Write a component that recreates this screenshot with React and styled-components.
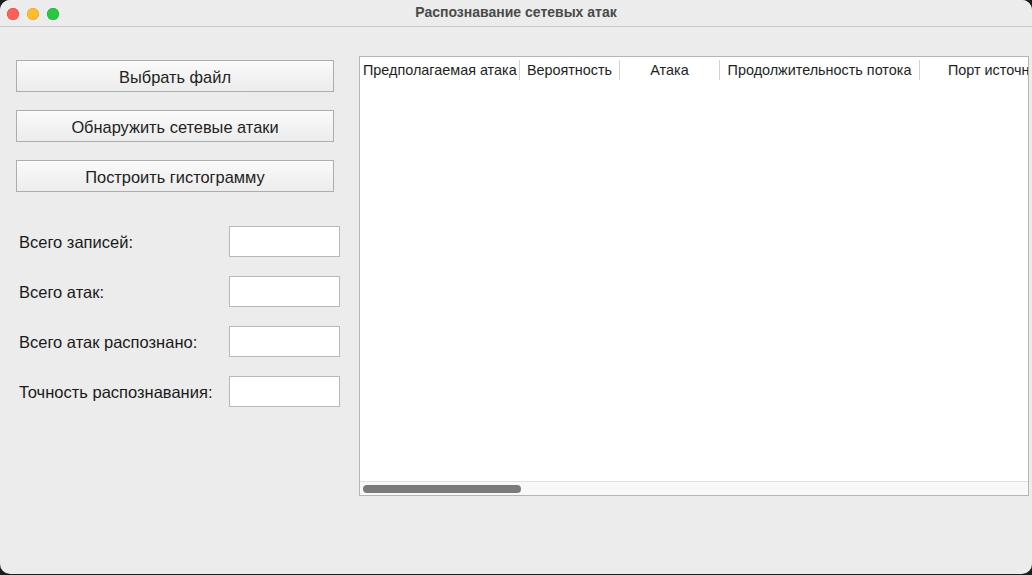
import styled, { createGlobalStyle } from "styled-components";

const Global = createGlobalStyle`
  html, body {
    margin: 0;
    padding: 0;
    background: #1d1d1f;
  }
  body {
    font-family: "Liberation Sans", Arial, sans-serif;
  }
`;

const Window = styled.div`
  width: 1032px;
  height: 574px;
  background: #ececec;
  border-radius: 10px;
  overflow: hidden;
  display: flex;
  flex-direction: column;
`;

const TitleBar = styled.div`
  height: 26px;
  border-bottom: 1px solid #c9c9c9;
  display: flex;
  align-items: center;
  position: relative;
  background: #ececec;
`;

const Lights = styled.div`
  display: flex;
  gap: 8px;
  padding-left: 7px;
  padding-top: 1px;
`;

const Light = styled.span`
  width: 12px;
  height: 12px;
  border-radius: 50%;
  background: ${(p) => p.color};
  box-shadow: inset 0 0 0 0.5px ${(p) => p.edge};
`;

const Title = styled.div`
  position: absolute;
  left: 0;
  right: 0;
  text-align: center;
  font-size: 14px;
  font-weight: bold;
  color: #4a4a4a;
  top: 4px;
`;

const Body = styled.div`
  flex: 1;
  display: flex;
  padding: 29px 3px 0 16px;
  gap: 19px;
`;

const Left = styled.div`
  width: 324px;
  padding-top: 4px;
  display: flex;
  flex-direction: column;
`;

const Buttons = styled.div`
  display: flex;
  flex-direction: column;
  gap: 18px;
  width: 318px;
`;

const Button = styled.button`
  height: 32px;
  border: 1px solid #adadad;
  background: linear-gradient(#fafafa, #ececec);
  font-family: "Liberation Sans", Arial, sans-serif;
  font-size: 16.4px;
  color: #222;
  padding: 2px 0 0;
  border-radius: 0;
`;

const Stats = styled.div`
  margin-top: 34px;
  display: flex;
  flex-direction: column;
  gap: 19px;
`;

const StatRow = styled.div`
  display: flex;
  align-items: center;
  justify-content: space-between;
  padding-left: 3px;
  height: 31px;
`;

const Label = styled.span`
  font-size: 16.5px;
  color: #1a1a1a;
  padding-top: 2px;
`;

const Field = styled.input`
  box-sizing: border-box;
  width: 111px;
  height: 31px;
  border: 1px solid #b9b9b9;
  background: #fff;
  outline: none;
`;

const TableBox = styled.div`
  width: 670px;
  height: 440px;
  box-sizing: border-box;
  border: 1px solid #b5b5b5;
  background: #fff;
  display: flex;
  flex-direction: column;
  overflow: hidden;
`;

const Header = styled.div`
  display: flex;
  height: 24px;
  align-items: center;
  white-space: nowrap;
  padding-top: 1px;
`;

const HeadCell = styled.div`
  flex: 0 0 ${(p) => p.w}px;
  box-sizing: border-box;
  font-size: 14.4px;
  color: #1e1e1e;
  text-align: ${(p) => (p.left ? "left" : "center")};
  padding-left: ${(p) => (p.left ? 3 : 0)}px;
  border-right: ${(p) => (p.last ? "none" : "1px solid #d2d2d2")};
  line-height: 20px;
  overflow: hidden;
`;

const Rows = styled.div`
  flex: 1;
`;

const ScrollTrack = styled.div`
  height: 13px;
  border-top: 1px solid #e0e0e0;
  background: #f8f8f8;
  display: flex;
  align-items: center;
  padding-left: 3px;
`;

const Thumb = styled.div`
  width: 158px;
  height: 8px;
  border-radius: 4px;
  background: #7b7b7b;
`;

const columns = [
  { t: "Предполагаемая атака", w: 160, left: true },
  { t: "Вероятность", w: 100 },
  { t: "Атака", w: 100 },
  { t: "Продолжительность потока", w: 200 },
  { t: "Порт источника", w: 160, last: true },
];

const stats = [
  "Всего записей:",
  "Всего атак:",
  "Всего атак распознано:",
  "Точность распознавания:",
];

export default function App() {
  return (
    <>
      <Global />
      <Window>
        <TitleBar>
          <Lights>
            <Light color="#fe5f57" edge="#e0443e" />
            <Light color="#febc2e" edge="#dea123" />
            <Light color="#28c840" edge="#1aab29" />
          </Lights>
          <Title>Распознавание сетевых атак</Title>
        </TitleBar>
        <Body>
          <Left>
            <Buttons>
              <Button>Выбрать файл</Button>
              <Button>Обнаружить сетевые атаки</Button>
              <Button>Построить гистограмму</Button>
            </Buttons>
            <Stats>
              {stats.map((s) => (
                <StatRow key={s}>
                  <Label>{s}</Label>
                  <Field />
                </StatRow>
              ))}
            </Stats>
          </Left>
          <TableBox>
            <Header>
              {columns.map((c) => (
                <HeadCell key={c.t} w={c.w} left={c.left} last={c.last}>
                  {c.t}
                </HeadCell>
              ))}
            </Header>
            <Rows />
            <ScrollTrack>
              <Thumb />
            </ScrollTrack>
          </TableBox>
        </Body>
      </Window>
    </>
  );
}
